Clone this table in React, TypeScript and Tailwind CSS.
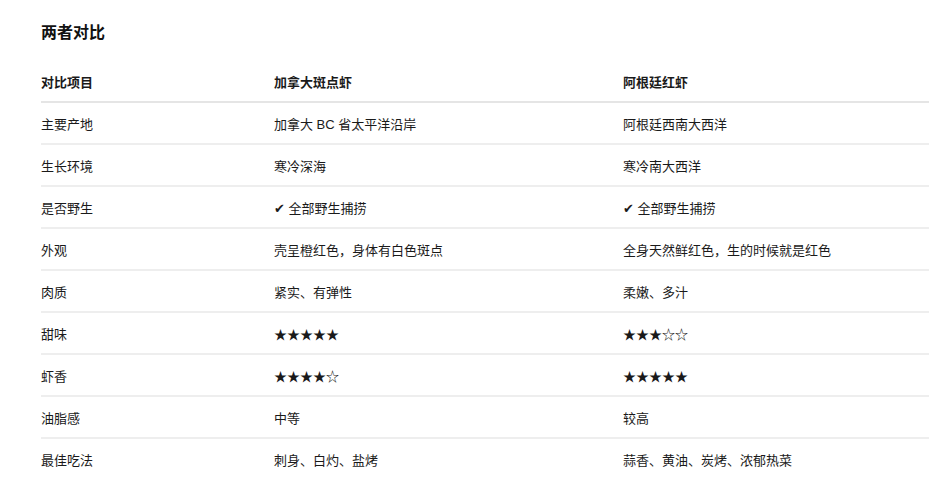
const rows: [string, string, string][] = [
  ["主要产地", "加拿大 BC 省太平洋沿岸", "阿根廷西南大西洋"],
  ["生长环境", "寒冷深海", "寒冷南大西洋"],
  ["是否野生", "✔ 全部野生捕捞", "✔ 全部野生捕捞"],
  ["外观", "壳呈橙红色，身体有白色斑点", "全身天然鲜红色，生的时候就是红色"],
  ["肉质", "紧实、有弹性", "柔嫩、多汁"],
  ["甜味", "★★★★★", "★★★☆☆"],
  ["虾香", "★★★★☆", "★★★★★"],
  ["油脂感", "中等", "较高"],
  ["最佳吃法", "刺身、白灼、盐烤", "蒜香、黄油、炭烤、浓郁热菜"],
];

export default function App() {
  return (
    <div className="min-h-screen bg-white pl-[41px] pt-[21px] text-[#1a1a1a] font-['Liberation_Sans','Noto_Sans_CJK_SC','DejaVu_Sans',sans-serif]">
      {/* Title */}
      <h2 className="text-[16px] font-bold leading-6 text-[#111]">两者对比</h2>

      {/* Table */}
      <div className="mt-4 text-[13px]">
        <div className="grid grid-cols-[233px_349px_1fr] h-[42px] border-b-2 border-[#e5e5e5] pt-[13px] font-bold leading-[18px]">
          <div>对比项目</div>
          <div>加拿大斑点虾</div>
          <div>阿根廷红虾</div>
        </div>
        {rows.map(([k, a, b], i) => (
          <div
            key={k}
            className={
              "grid grid-cols-[233px_349px_1fr] h-[42px] pt-[13px] leading-[18px] " +
              (i < rows.length - 1 ? "border-b-2 border-[#eeeeee]" : "")
            }
          >
            <div>{k}</div>
            <div>{a}</div>
            <div>{b}</div>
          </div>
        ))}
      </div>
    </div>
  );
}
